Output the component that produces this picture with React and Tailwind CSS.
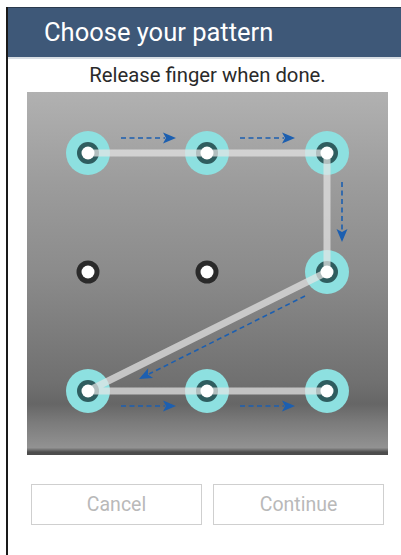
import React from "react";

const COLS = [61, 180, 300];
const ROWS = [61, 180, 299];

function Arrow({ x1, y1, x2, y2 }) {
  const dx = x2 - x1;
  const dy = y2 - y1;
  const len = Math.hypot(dx, dy);
  const ux = dx / len;
  const uy = dy / len;
  const hl = 13;
  const hw = 5.5;
  const bx = x2 - ux * hl;
  const by = y2 - uy * hl;
  const px = -uy;
  const py = ux;
  return (
    <g>
      <line x1={x1} y1={y1} x2={bx + ux * 2} y2={by + uy * 2} stroke="#1c5fb0" strokeWidth="1.6" strokeDasharray="5 3.5" />
      <polygon
        points={`${x2},${y2} ${bx + px * hw},${by + py * hw} ${bx + ux * 3},${by + uy * 3} ${bx - px * hw},${by - py * hw}`}
        fill="#1c5fb0"
      />
    </g>
  );
}

function PatternSvg() {
  const active = [
    [0, 0], [1, 0], [2, 0], [2, 1], [0, 2], [1, 2], [2, 2],
  ];
  const inactive = [[0, 1], [1, 1]];
  const path = "M61 61 L180 61 L300 61 L300 180 L61 299 L180 299 L300 299";
  return (
    <svg width="361" height="363" viewBox="0 0 361 363" className="block">
      {active.map(([c, r]) => (
        <circle key={`o${c}${r}`} cx={COLS[c]} cy={ROWS[r]} r="22" fill="#8de0e0" />
      ))}
      {active.map(([c, r]) => (
        <circle key={`i${c}${r}`} cx={COLS[c]} cy={ROWS[r]} r="11" fill="#2f5d5f" />
      ))}
      {inactive.map(([c, r]) => (
        <circle key={`n${c}${r}`} cx={COLS[c]} cy={ROWS[r]} r="11.5" fill="#2a2a2a" />
      ))}
      <path d={path} fill="none" stroke="#e4e4e4" strokeOpacity="0.72" strokeWidth="7" strokeLinejoin="miter" />
      {[...active, ...inactive].map(([c, r]) => (
        <circle key={`w${c}${r}`} cx={COLS[c]} cy={ROWS[r]} r="6.5" fill="#ffffff" />
      ))}
      <Arrow x1={94} y1={46} x2={149} y2={46} />
      <Arrow x1={213} y1={46} x2={268} y2={46} />
      <Arrow x1={315} y1={90} x2={315} y2={150} />
      <Arrow x1={278} y1={204} x2={112} y2={287} />
      <Arrow x1={94} y1={314} x2={149} y2={314} />
      <Arrow x1={213} y1={314} x2={268} y2={314} />
    </svg>
  );
}

export default function App() {
  return (
    <div className="w-[401px] h-[555px] bg-white pt-[7px] pl-[6px] overflow-hidden" style={{ fontFamily: "Roboto, 'Noto Sans', sans-serif" }}>
      <div className="h-full border-l-2 border-[#1a1a1a] flex flex-col">
        <div className="h-[50px] bg-[#3e5878] border-t border-[#2a3a4e] flex items-center pl-[36px] shrink-0">
          <span className="text-white text-[25.5px] leading-none">Choose your pattern</span>
        </div>
        <div className="h-[2px] bg-[#d8dee4] shrink-0" />
        <div className="h-[33px] flex items-center justify-center text-[20.3px] text-[#2a2a2a] leading-none pl-[6px]">
          Release finger when done.
        </div>
        <div className="ml-[19px] w-[361px] h-[363px] bg-[linear-gradient(to_bottom,#b1b1b1_0%,#9c9c9c_25%,#8b8b8b_50%,#707070_80%,#666_86%,#7b7b7b_91%,#929292_98%,#4d4d4d_99.2%,#4d4d4d_100%)] shrink-0">
          <PatternSvg />
        </div>
        <div className="flex gap-[11px] ml-[23px] mt-[29px]">
          <div className="w-[171px] h-[41px] border border-[#cfcfcf] flex items-center justify-center text-[19.5px] text-[#b9b9b9]">
            Cancel
          </div>
          <div className="w-[171px] h-[41px] border border-[#cfcfcf] flex items-center justify-center text-[19.5px] text-[#b9b9b9]">
            Continue
          </div>
        </div>
      </div>
    </div>
  );
}
